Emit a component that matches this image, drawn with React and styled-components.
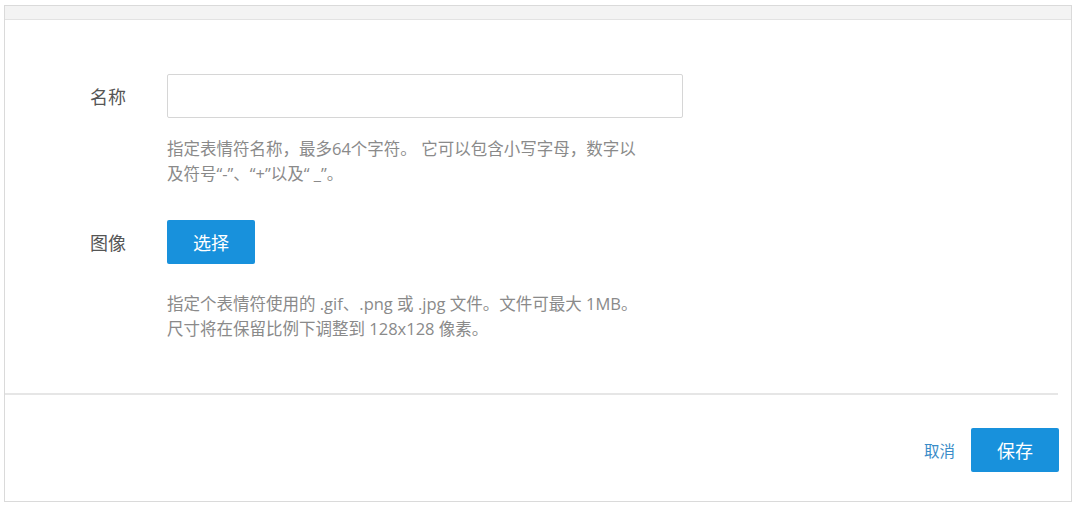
import React from 'react';
import styled, { createGlobalStyle } from 'styled-components';

const GlobalStyle = createGlobalStyle`
  body {
    margin: 0;
    background: #fff;
    font-family: "Open Sans", "Noto Sans CJK SC", sans-serif;
  }
`;

const Frame = styled.div`
  margin: 5px 4px 0 4px;
  width: 1066px;
  height: 495px;
  border: 1px solid #dadada;
  display: flex;
  flex-direction: column;
  background: #fff;
`;

const TopBar = styled.div`
  height: 13px;
  background: #f3f3f3;
  border-bottom: 1px solid #e2e2e2;
`;

const Form = styled.div`
  flex: 1;
  padding: 54px 0 0 85px;
  display: grid;
  grid-template-columns: 77px 600px;
  align-content: start;
`;

const Label = styled.div`
  height: 44px;
  display: flex;
  align-items: center;
  font-size: 18px;
  color: #555;
`;

const Field = styled.div`
  display: flex;
  flex-direction: column;
  align-items: flex-start;
  margin-bottom: ${(p) => p.$gap || 0}px;
`;

const Input = styled.input`
  box-sizing: border-box;
  width: 516px;
  height: 44px;
  border: 1px solid #d6d6d6;
  border-radius: 2px;
  outline: none;
  font-family: inherit;
  font-size: 15px;
  padding: 0 12px;
`;

const Help = styled.p`
  margin: ${(p) => p.$top}px 0 0 0;
  font-size: 16.5px;
  line-height: 25px;
  color: #8a8a8a;
`;

const Button = styled.button`
  box-sizing: border-box;
  width: 88px;
  height: 44px;
  border: none;
  border-radius: 2px;
  background: #1891dc;
  color: #fff;
  font-family: inherit;
  font-size: 18px;
  cursor: pointer;
`;

const Divider = styled.hr`
  margin: 0 13px 0 0;
  border: none;
  border-top: 2px solid #e6e6e6;
`;

const Footer = styled.div`
  height: 106px;
  box-sizing: border-box;
  padding: 33px 12px 0 0;
  display: flex;
  justify-content: flex-end;
  align-items: flex-start;
  gap: 16px;
`;

const LinkButton = styled.span`
  height: 44px;
  display: flex;
  align-items: center;
  font-size: 15.5px;
  color: #3a8cc8;
  cursor: pointer;
`;

export default function App() {
  return (
    <>
      <GlobalStyle />
      <Frame>
        <TopBar />
        <Form>
          <Label>名称</Label>
          <Field $gap={34}>
            <Input type="text" />
            <Help $top={18}>
              指定表情符名称，最多64个字符。 它可以包含小写字母，数字以
              <br />
              及符号“-”、“+”以及“ _”。
            </Help>
          </Field>
          <Label>图像</Label>
          <Field>
            <Button>选择</Button>
            <Help $top={27}>
              指定个表情符使用的 .gif、.png 或 .jpg 文件。文件可最大 1MB。
              <br />
              尺寸将在保留比例下调整到 128x128 像素。
            </Help>
          </Field>
        </Form>
        <Divider />
        <Footer>
          <LinkButton>取消</LinkButton>
          <Button>保存</Button>
        </Footer>
      </Frame>
    </>
  );
}
